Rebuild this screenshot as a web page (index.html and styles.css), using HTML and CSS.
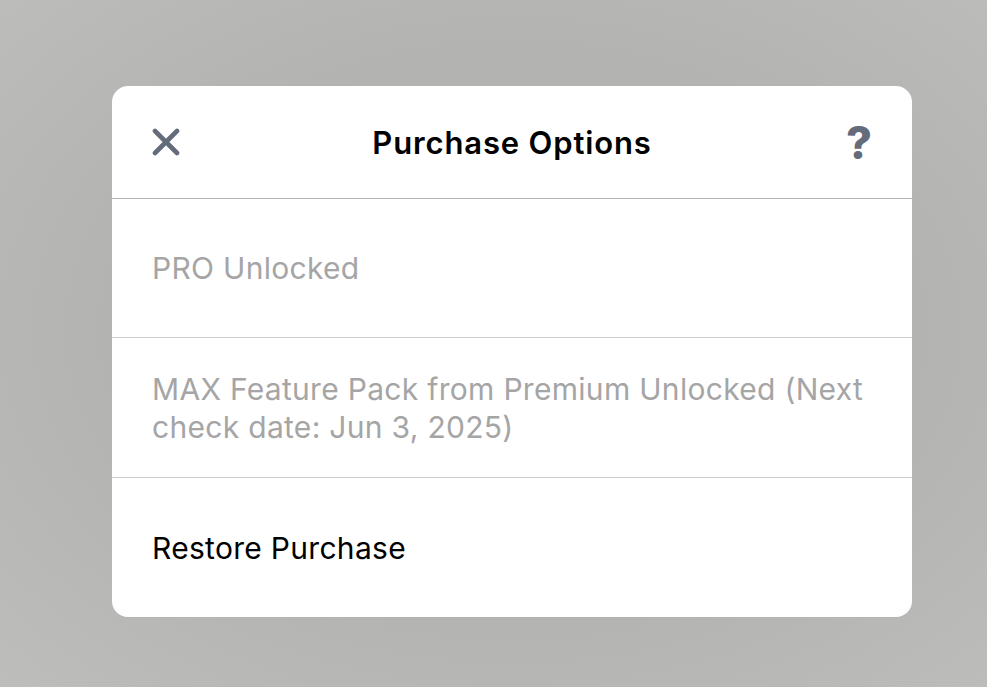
FILE: index.html
```html
<!DOCTYPE html>
<html lang="en">
<head>
    <meta charset="UTF-8">
    <meta name="viewport" content="width=device-width, initial-scale=1.0">
    <title>Purchase Options</title>
    <link rel="stylesheet" href="styles.css">
</head>
<body>
    <div class="backdrop">
        <div class="sheet">
            <div class="sheet-header">
                <button class="icon-btn" aria-label="Close">
                    <svg width="28" height="28" viewBox="0 0 28 28">
                        <path d="M3 3 L25 25 M25 3 L3 25" stroke="#646c7b" stroke-width="4.6" stroke-linecap="round" fill="none"/>
                    </svg>
                </button>
                <h1>Purchase Options</h1>
                <button class="icon-btn help" aria-label="Help">?</button>
            </div>

            <div class="row muted">PRO Unlocked</div>
            <div class="row muted tall">MAX Feature Pack from Premium Unlocked (Next check date: Jun 3, 2025)</div>
            <div class="row">Restore Purchase</div>
        </div>
    </div>
</body>
</html>
```

FILE: styles.css
```css
body {
    margin: 0;
    font-family: Inter, "Noto Sans", sans-serif;
    background: radial-gradient(ellipse at 52% 48%, #afb0ad 0%, #b3b4b1 55%, #bdbebb 100%);
    min-height: 100vh;
}
.backdrop {
    padding: 86px 75px 0 112px;
}
.sheet {
    width: 800px;
    background: #fff;
    border-radius: 16px;
    overflow: hidden;
}
.sheet-header {
    height: 112px;
    display: flex;
    align-items: center;
    justify-content: space-between;
    padding: 0 40px;
    border-bottom: 1px solid #b4b4b4;
}
.sheet-header h1 {
    margin: 0;
    font-size: 31px;
    font-weight: 600;
    color: #000;
    letter-spacing: 0.85px;
}
.icon-btn {
    background: none;
    border: none;
    padding: 0;
    width: 30px;
    display: flex;
    align-items: center;
    justify-content: flex-start;
    cursor: pointer;
}
.help {
    justify-content: flex-end;
    font-family: Inter, sans-serif;
    font-size: 45px;
    font-weight: 800;
    color: #646c7b;
    line-height: 1;
}
.row {
    height: 139px;
    box-sizing: border-box;
    display: flex;
    align-items: center;
    padding: 0 40px;
    font-size: 30px;
    line-height: 38px;
    color: #000;
    border-bottom: 1px solid #cfcfd1;
    letter-spacing: 0.3px;
}
.row.tall {
    height: 140px;
}
.row:last-child {
    border-bottom: none;
}
.muted {
    color: #a5a5a6;
}
```
